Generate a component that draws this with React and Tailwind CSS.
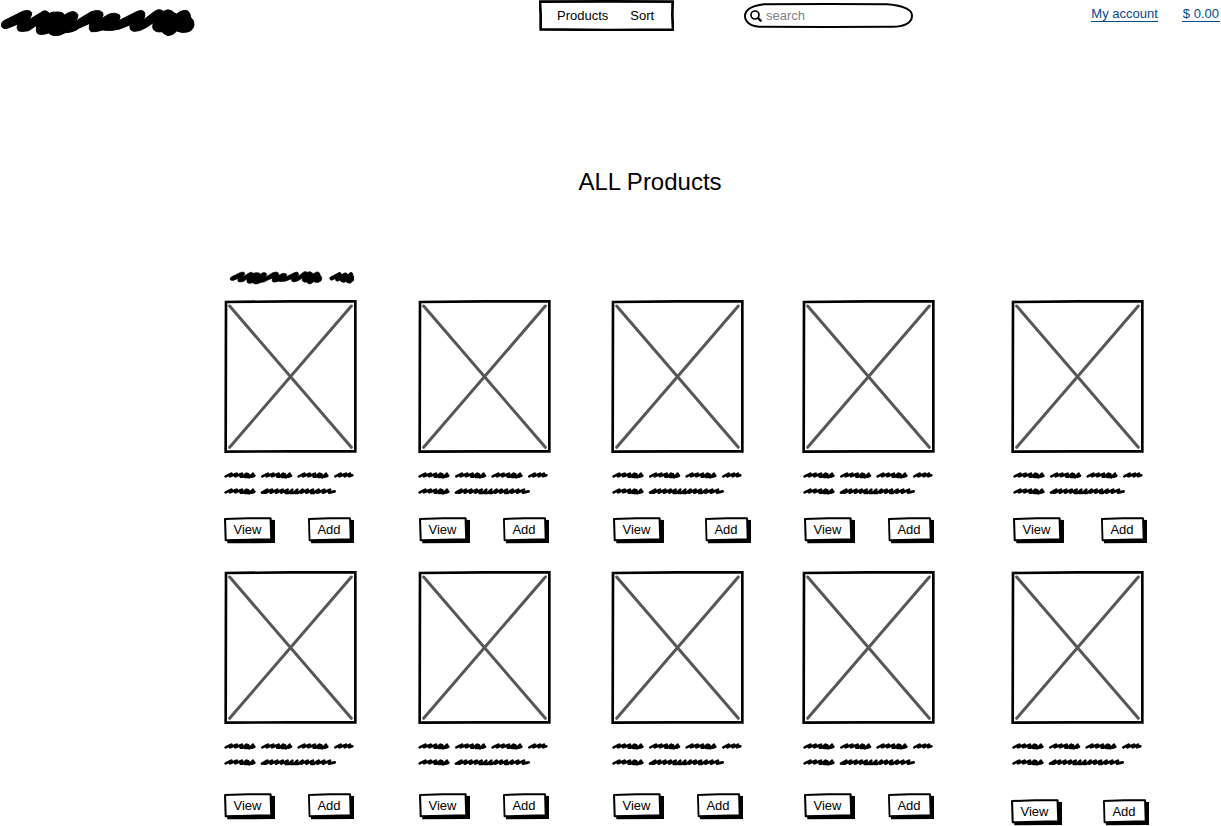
import React from "react";

const LONG_SCRIBBLE =
  "M4 76 Q3 67 12 62 L68 34 Q90 28 95 38 Q96 47 86 60 L122 38 Q136 26 148 40 Q156 35 176 36 Q188 36 194 45 Q206 36 216 35 Q230 34 234 46 Q234 54 226 64 L272 36 Q296 26 308 38 Q312 46 304 56 L328 42 Q344 36 358 44 Q363 50 356 62 L408 36 Q428 26 434 38 Q437 46 430 60 L464 34 Q478 24 490 34 Q504 26 514 32 Q522 40 530 42 Q540 32 556 31 Q570 32 572 52 Q583 62 582 74 Q580 92 562 96 Q546 100 530 93 Q520 106 504 107 Q492 104 486 95 Q468 98 460 88 Q456 82 460 68 L440 82 Q418 95 402 94 Q388 92 390 78 L392 74 L356 88 Q330 94 308 90 Q286 97 274 95 Q264 90 270 70 L238 84 Q222 97 196 98 Q180 108 162 107 Q150 104 146 99 Q134 104 120 103 Q108 102 109 88 L110 76 L86 92 Q66 96 56 93 Q48 86 54 72 L22 85 Q6 88 4 76 Z";

const SHORT_SCRIBBLE =
  "M350 55 L373 43 L367 58 L391 44 L382 60 L386 62 L408 43 L398 62 L404 64 L426 46";

const WORD =
  "M5 16 L22 8 L18 16 L38 8 L34 16 L54 8 L50 17 L56 17 L68 8 L64 18 L72 18 L73 10 L76 19 L87 8 L83 17 L91 14";

const WORD_END =
  "M334 16 L350 8 L346 16 L366 8 L362 16 L378 8 L375 16 L385 13";

const LONG_WORD =
  "M114 65 L130 56 L120 65 L126 65 L144 56 L140 65 L160 56 L156 65 L176 56 L172 65 L191 56 L185 66 L193 66 L205 56 L200 66 L208 66 L220 56 L215 66 L222 66 L236 56 L231 65 L251 56 L247 65 L267 56 L262 66 L268 66 L284 56 L280 65 L301 56 L297 65 L318 56 L315 65 L332 61";

const rowOne = [
  { id: "a1", text: "", actions: "gap-[33px]" },
  { id: "a2", text: "", actions: "gap-[33px] pl-px" },
  { id: "a3", text: "pl-px", actions: "gap-[41px] pl-0.5" },
  { id: "a4", text: "pl-px", actions: "gap-[33px] pl-0.5" },
  { id: "a5", text: "pl-0.5", actions: "gap-[37px] pl-0.5" },
];

const rowTwo = [
  { id: "b1", text: "", actions: "gap-[33px] pt-[5px]" },
  { id: "b2", text: "", actions: "gap-[33px] pl-px pt-[5px]" },
  { id: "b3", text: "pl-px", actions: "gap-[33px] pl-0.5 pt-[5px]" },
  { id: "b4", text: "pl-px", actions: "gap-[33px] pl-0.5 pt-[5px]" },
  { id: "b5", text: "pl-px", actions: "gap-[41px] pt-[11px]" },
];

function Logo() {
  return (
    <svg viewBox="0 0 600 135" className="h-[45px] w-[200px]" role="img" aria-label="Store logo">
      <path d={LONG_SCRIBBLE} fill="#000" stroke="#000" strokeWidth="3" strokeLinejoin="round" />
    </svg>
  );
}

function SectionScribble() {
  return (
    <svg viewBox="0 0 378 60" className="ml-1 h-[20px] w-[126px]" role="img" aria-label="Featured">
      <clipPath id="section-edge">
        <rect x="330" y="0" width="87" height="100" />
      </clipPath>
      <g stroke="#000" strokeLinecap="round" strokeLinejoin="round" transform="translate(-39 -24)">
        <path d={LONG_SCRIBBLE} fill="#000" strokeWidth="4" transform="translate(44 21) scale(.475)" />
        <g clipPath="url(#section-edge)">
          <path d={SHORT_SCRIBBLE} fill="none" strokeWidth="13" />
        </g>
      </g>
    </svg>
  );
}

function TextScribble() {
  return (
    <svg viewBox="0 0 396 78" className="h-[26px] w-[132px]" aria-hidden="true">
      <g fill="none" stroke="#000" strokeWidth="8" strokeLinecap="round" strokeLinejoin="round">
        <path d={WORD} />
        <path d={WORD} transform="translate(110 0)" />
        <path d={WORD} transform="translate(219 0)" />
        <path d={WORD_END} />
        <path d={WORD} transform="translate(0 48)" />
        <path d={LONG_WORD} />
      </g>
    </svg>
  );
}

function Placeholder() {
  return (
    <svg viewBox="0 0 399 459" className="h-[153px] w-[133px]" role="img" aria-label="Product image">
      <path d="M17 18 L382 442 M382 18 L17 442" fill="none" stroke="#575757" strokeWidth="9" strokeLinecap="round" />
      <path d="M6 6 L200 4 L394 4 L394 454 L200 454 L5 455 Z" fill="none" stroke="#000" strokeWidth="8" />
    </svg>
  );
}

function SketchButton({ children, width }) {
  return (
    <button type="button" className={`relative h-[27px] pr-1 pb-px text-[13px] leading-6 ${width}`}>
      <svg viewBox="0 0 150 81" preserveAspectRatio="none" className="absolute inset-0 h-full w-full" aria-hidden="true">
        <path d="M136 8 L150 9 L150 78 L10 79 L9 66 L136 66 Z" fill="#000" />
        <path d="M3 6 L70 4 L137 4 L139 67 L75 68 L5 70 Z" fill="#fff" stroke="#000" strokeWidth="6" strokeLinejoin="round" />
      </svg>
      <span className="relative">{children}</span>
    </button>
  );
}

function ProductCard({ text, actions }) {
  return (
    <article className="flex flex-col items-start">
      <Placeholder />
      <div className={`mt-[18px] ${text}`}>
        <TextScribble />
      </div>
      <div className={`mt-5 flex ${actions}`}>
        <SketchButton width="w-[51px]">View</SketchButton>
        <SketchButton width="w-[46px]">Add</SketchButton>
      </div>
    </article>
  );
}

function ProductRow({ items }) {
  return (
    <div className="grid grid-cols-[194fr_193fr_191fr_209fr_210fr]">
      {items.map((item) => (
        <ProductCard key={item.id} text={item.text} actions={item.actions} />
      ))}
    </div>
  );
}

function Header() {
  return (
    <header className="grid grid-cols-[539fr_205fr_477fr] items-start text-[13px] leading-4">
      <a href="#home">
        <Logo />
      </a>
      <nav className="relative flex h-[31px] w-[135px] items-center gap-[22px] pl-[18px]">
        <svg viewBox="0 0 405 93" preserveAspectRatio="none" className="absolute inset-0 h-full w-full" aria-hidden="true">
          <path d="M3 5 L210 4 L401 5 L400 45 L402 89 L210 90 L5 88 L5 45 Z" fill="#fff" stroke="#000" strokeWidth="8" />
        </svg>
        <button type="button" className="relative">Products</button>
        <button type="button" className="relative">Sort</button>
      </nav>
      <div className="flex items-start justify-between pr-px">
        <div className="relative mt-[3px] flex h-[25px] w-[169px] items-center pl-[6px]">
          <svg viewBox="0 0 507 75" preserveAspectRatio="none" className="absolute inset-0 h-full w-full" aria-hidden="true">
            <path d="M60 4 L250 3 L430 4 C475 8 504 20 504 38 C504 60 480 72 440 71 L250 72 L45 71 C18 69 3 56 3 40 C3 18 25 8 60 4 Z" fill="#fff" stroke="#000" strokeWidth="6" />
          </svg>
          <label htmlFor="product-search" aria-label="Search products" className="relative">
            <svg viewBox="0 0 36 36" className="h-3 w-3 shrink-0" aria-hidden="true">
              <circle cx="15" cy="15" r="12" fill="none" stroke="#000" strokeWidth="5" />
              <path d="M24 24 L32 32" stroke="#000" strokeWidth="7" strokeLinecap="round" />
            </svg>
          </label>
          <input
            id="product-search"
            type="search"
            aria-label="Search products"
            placeholder="search"
            className="relative ml-1 h-4 w-full min-w-0 bg-transparent pr-4 text-[13px] leading-4 outline-none placeholder:text-[#808087]"
          />
        </div>
        <div className="mt-[7px] flex gap-6 text-[#004b8d]">
          <a href="#account" className="border-b border-[#004b8d] leading-[14px]">My account</a>
          <a href="#cart" className="border-b border-[#004b8d] px-px leading-[14px]">$ 0.00</a>
        </div>
      </div>
    </header>
  );
}

export default function App() {
  return (
    <div className="min-h-screen bg-white font-['Liberation_Sans',Arial,sans-serif] text-black">
      <Header />
      <main>
        <h1 className="mt-[121px] pl-[79px] text-center text-2xl leading-8">ALL Products</h1>
        <section className="mt-[70px] pl-[224px]">
          <h2 className="mb-3 flex">
            <SectionScribble />
          </h2>
          <div className="flex flex-col gap-[27px]">
            <ProductRow items={rowOne} />
            <ProductRow items={rowTwo} />
          </div>
        </section>
      </main>
    </div>
  );
}
